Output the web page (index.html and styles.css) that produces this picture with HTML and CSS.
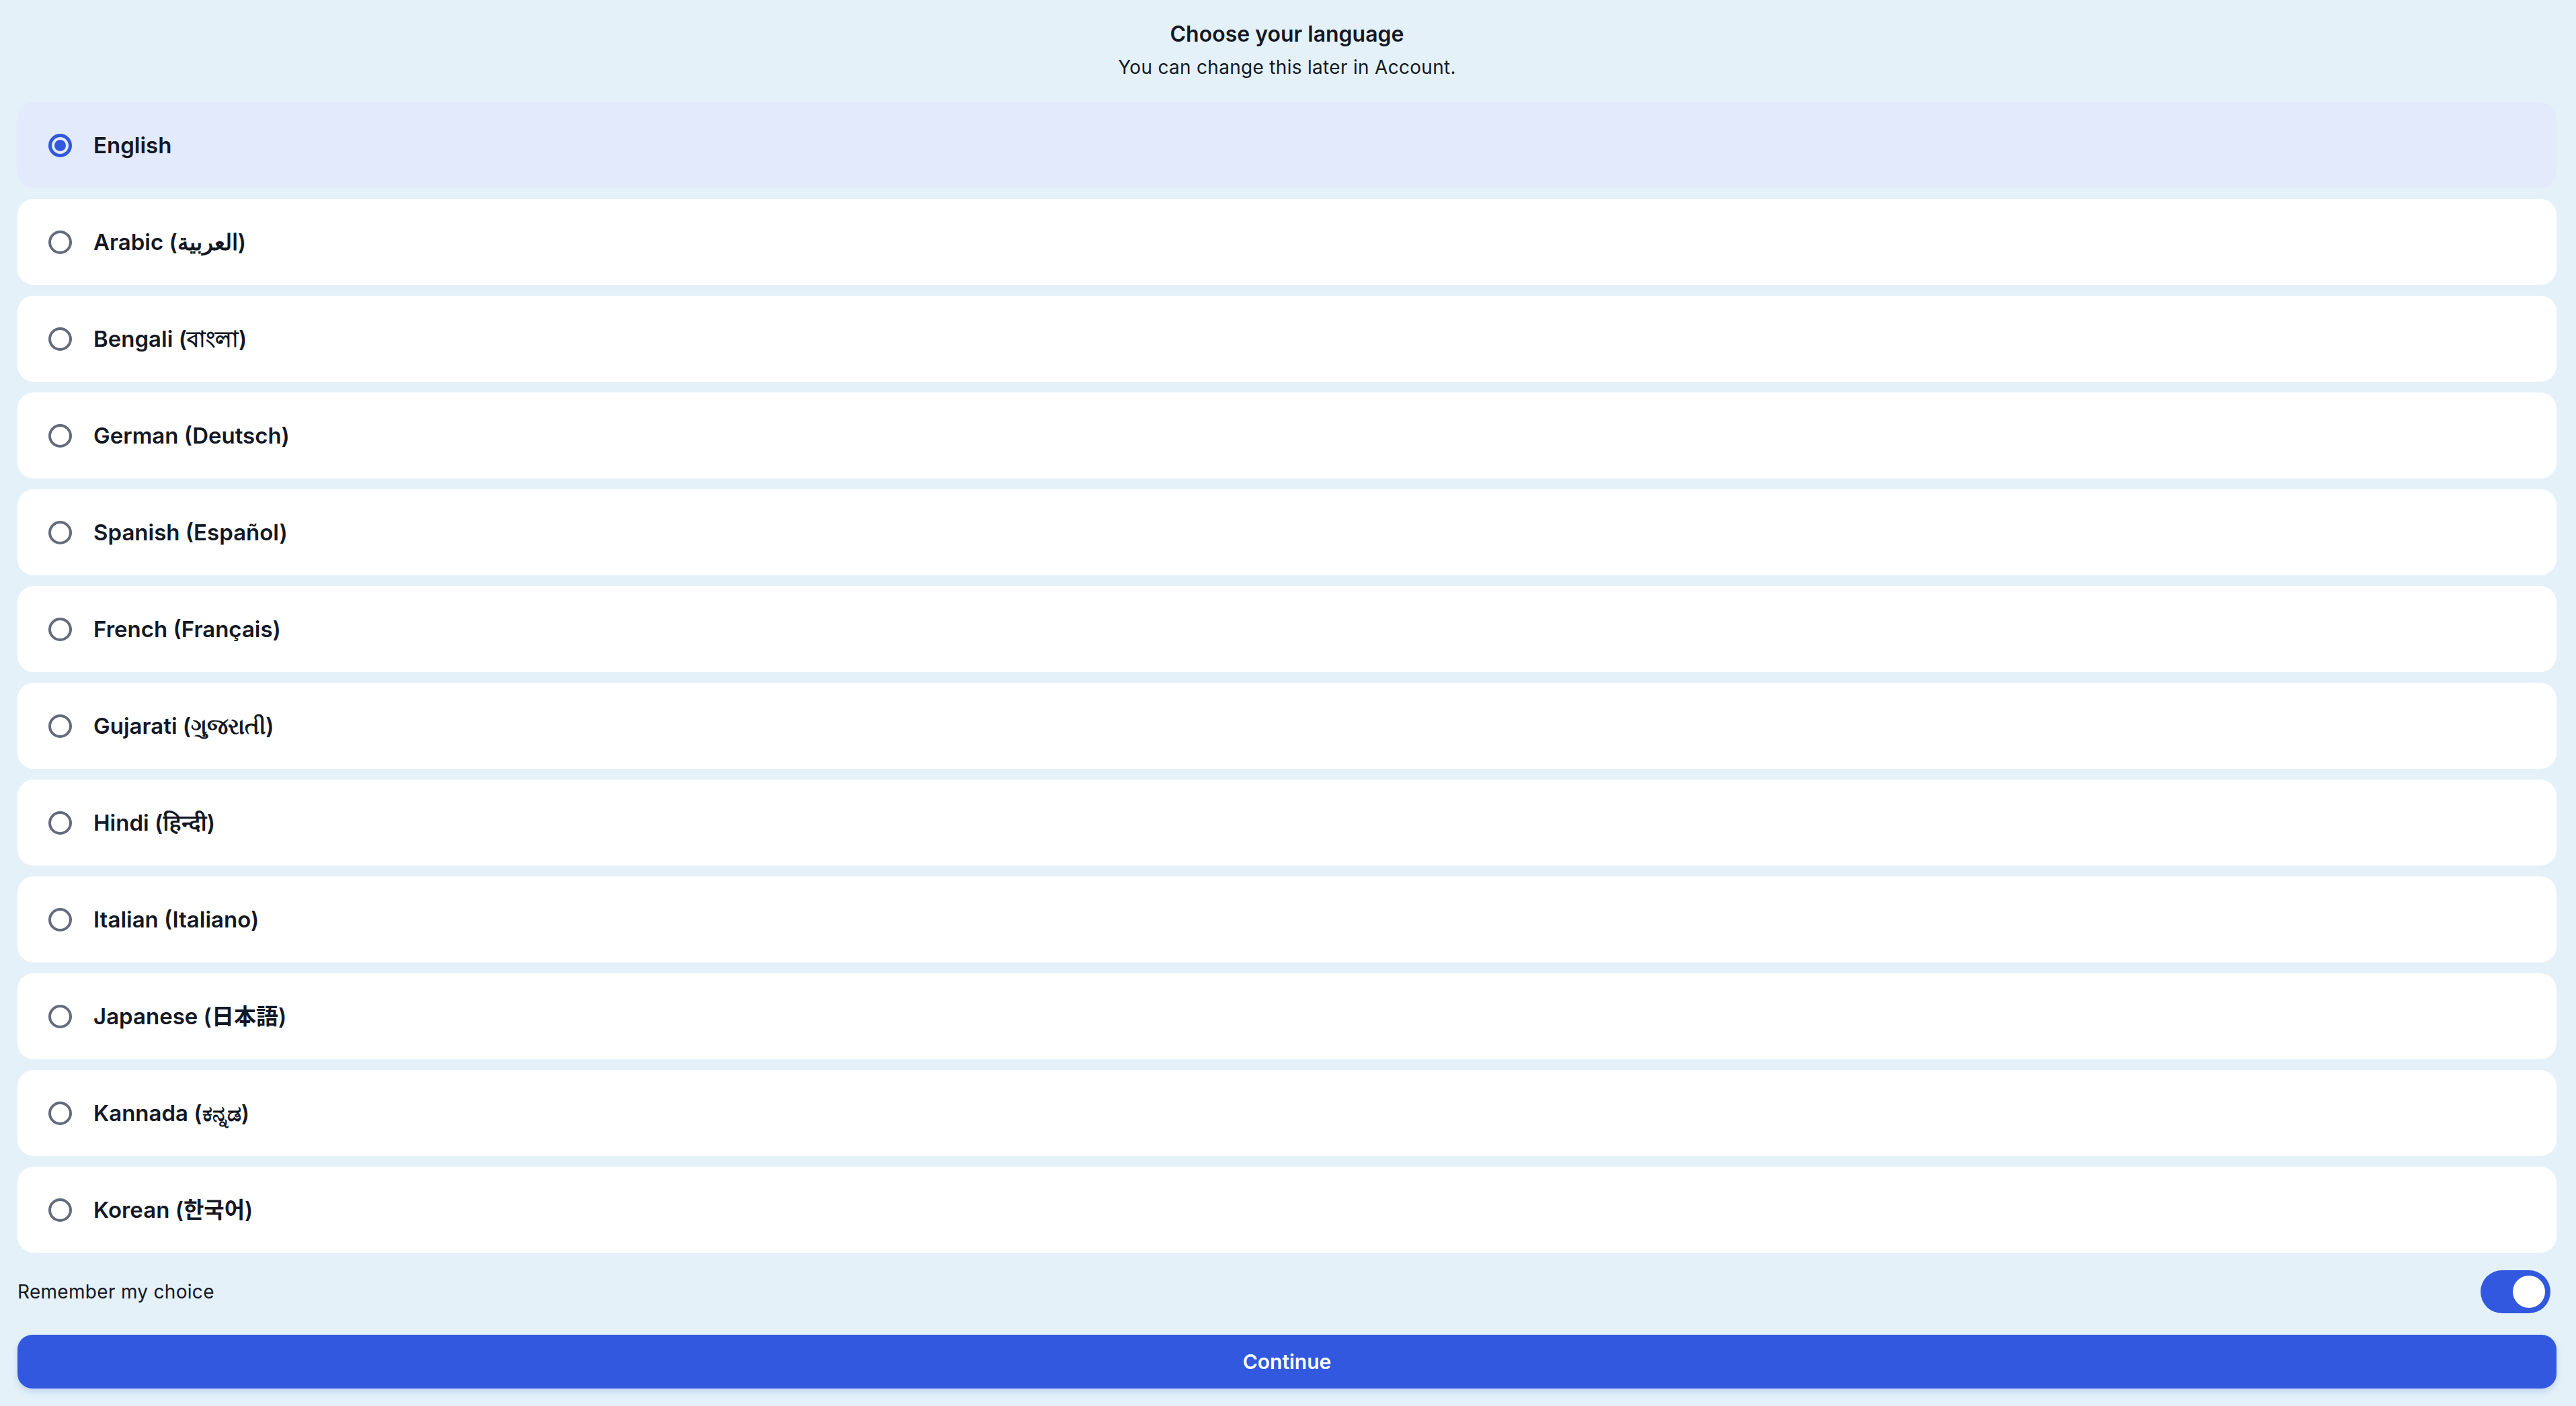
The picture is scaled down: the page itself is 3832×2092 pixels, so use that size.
FILE: index.html
```html
<!DOCTYPE html>
<html>
  <head>
    <meta charset="utf-8">
    <title>Choose your language</title>
    <link rel="stylesheet" href="styles.css">
  </head>
  <body>
    <div class="page">
      <div class="header">
        <h1 class="title">Choose your language</h1>
        <p class="subtitle">You can change this later in Account.</p>
      </div>

      <div class="options">
        <label class="option selected"><input type="radio" name="lang" class="radio" checked><span class="label">English</span></label>
        <label class="option"><input type="radio" name="lang" class="radio"><span class="label">Arabic (العربية)</span></label>
        <label class="option"><input type="radio" name="lang" class="radio"><span class="label">Bengali (বাংলা)</span></label>
        <label class="option"><input type="radio" name="lang" class="radio"><span class="label">German (Deutsch)</span></label>
        <label class="option"><input type="radio" name="lang" class="radio"><span class="label">Spanish (Español)</span></label>
        <label class="option"><input type="radio" name="lang" class="radio"><span class="label">French (Français)</span></label>
        <label class="option"><input type="radio" name="lang" class="radio"><span class="label">Gujarati (ગુજરાતી)</span></label>
        <label class="option"><input type="radio" name="lang" class="radio"><span class="label">Hindi (हिन्दी)</span></label>
        <label class="option"><input type="radio" name="lang" class="radio"><span class="label">Italian (Italiano)</span></label>
        <label class="option"><input type="radio" name="lang" class="radio"><span class="label">Japanese (日本語)</span></label>
        <label class="option"><input type="radio" name="lang" class="radio"><span class="label">Kannada (ಕನ್ನಡ)</span></label>
        <label class="option"><input type="radio" name="lang" class="radio"><span class="label">Korean (한국어)</span></label>
      </div>

      <div class="remember">
        <span class="remember-text">Remember my choice</span>
        <span class="toggle on"><span class="knob"></span></span>
      </div>

      <button class="continue" type="button">Continue</button>
    </div>
  </body>
</html>
```

FILE: styles.css
```css
html {
  font-family: Inter, "Noto Sans", "Noto Sans CJK JP", "Noto Sans CJK KR", sans-serif;
  color: #141824;
}
body {
  margin: 0;
  background-color: #e4f1f8;
}
.page {
  padding: 0 29px 26px 26px;
}
.header {
  text-align: center;
  padding-top: 31px;
  padding-bottom: 34px;
}
.title {
  margin: 0;
  font-size: 32px;
  line-height: 40px;
  font-weight: 600;
}
.subtitle {
  margin: 11px 0 0 0;
  font-size: 28px;
  line-height: 36px;
  font-weight: 400;
  letter-spacing: 0.3px;
}
.options {
  display: flex;
  flex-direction: column;
  gap: 16px;
}
.option {
  display: flex;
  align-items: center;
  gap: 32px;
  height: 128px;
  box-sizing: border-box;
  padding-left: 46px;
  background-color: #ffffff;
  border-radius: 24px;
}
.option.selected {
  background-color: #e3eafc;
}
.radio {
  appearance: none;
  -webkit-appearance: none;
  margin: 0;
  width: 35px;
  height: 35px;
  box-sizing: border-box;
  border: 4px solid #646b7d;
  border-radius: 50%;
  display: flex;
  align-items: center;
  justify-content: center;
  background: transparent;
}
.radio:checked {
  border: 5px solid #3158df;
}
.radio:checked::after {
  content: "";
  width: 17px;
  height: 17px;
  border-radius: 50%;
  background-color: #3158df;
}
.label {
  font-size: 33px;
  line-height: 40px;
  font-weight: 600;
}
.remember {
  display: flex;
  align-items: center;
  justify-content: space-between;
  margin-top: 26px;
  height: 64px;
}
.remember-text {
  font-size: 28px;
  line-height: 36px;
  letter-spacing: 0.3px;
}
.toggle {
  width: 104px;
  height: 64px;
  box-sizing: border-box;
  border-radius: 32px;
  background-color: #cbd2dc;
  padding: 8px;
  margin-right: 9px;
  display: flex;
}
.toggle.on {
  background-color: #3158df;
  justify-content: flex-end;
}
.knob {
  width: 48px;
  height: 48px;
  border-radius: 50%;
  background-color: #ffffff;
}
.continue {
  display: block;
  width: 100%;
  height: 80px;
  margin-top: 32px;
  border: 0;
  border-radius: 22px;
  background-color: #3158df;
  color: #ffffff;
  font-family: inherit;
  font-size: 30px;
  font-weight: 600;
  box-shadow: 0 5px 10px rgba(49, 88, 223, 0.18);
}
```
